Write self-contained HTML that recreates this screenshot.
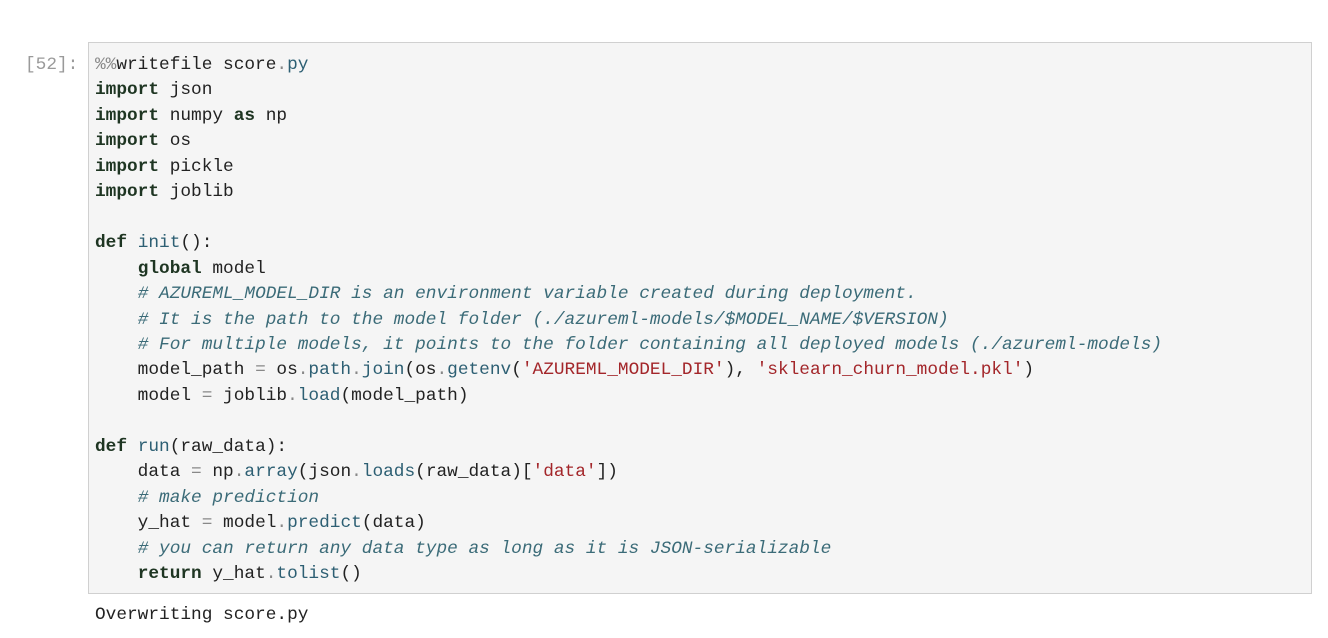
<!DOCTYPE html>
<html><head><meta charset="utf-8"><style>
body{margin:0;background:#fff;width:1328px;height:638px;overflow:hidden;font-family:"Liberation Mono",monospace;}
.prompt{position:absolute;left:25px;top:53px;font-size:17.8px;color:#9a9a9a;line-height:25.45px;}
.box{position:absolute;left:88px;top:42px;width:1224px;height:552px;background:#f5f5f5;border:1px solid #d0d0d0;box-sizing:border-box;}
pre{position:absolute;left:95px;top:53px;margin:0;font-family:"Liberation Mono",monospace;font-size:17.8px;line-height:25.45px;color:#222;}
.k{font-weight:bold;color:#1e3522}
.f{color:#2d5f73}
.c{font-style:italic;color:#3b6b78}
.s{color:#a3262a}
.o{color:#888}
.out{position:absolute;left:95px;top:603px;margin:0;font-size:17.8px;line-height:25px;color:#222;}
</style></head><body>
<div class="prompt">[52]:</div>
<div class="box"></div>
<pre><span class="o">%%</span>writefile score<span class="o">.</span><span class="f">py</span>
<span class="k">import</span> json
<span class="k">import</span> numpy <span class="k">as</span> np
<span class="k">import</span> os
<span class="k">import</span> pickle
<span class="k">import</span> joblib

<span class="k">def</span> <span class="f">init</span>():
    <span class="k">global</span> model
    <span class="c"># AZUREML_MODEL_DIR is an environment variable created during deployment.</span>
    <span class="c"># It is the path to the model folder (./azureml-models/$MODEL_NAME/$VERSION)</span>
    <span class="c"># For multiple models, it points to the folder containing all deployed models (./azureml-models)</span>
    model_path <span class="o">=</span> os<span class="o">.</span><span class="f">path</span><span class="o">.</span><span class="f">join</span>(os<span class="o">.</span><span class="f">getenv</span>(<span class="s">'AZUREML_MODEL_DIR'</span>), <span class="s">'sklearn_churn_model.pkl'</span>)
    model <span class="o">=</span> joblib<span class="o">.</span><span class="f">load</span>(model_path)

<span class="k">def</span> <span class="f">run</span>(raw_data):
    data <span class="o">=</span> np<span class="o">.</span><span class="f">array</span>(json<span class="o">.</span><span class="f">loads</span>(raw_data)[<span class="s">'data'</span>])
    <span class="c"># make prediction</span>
    y_hat <span class="o">=</span> model<span class="o">.</span><span class="f">predict</span>(data)
    <span class="c"># you can return any data type as long as it is JSON-serializable</span>
    <span class="k">return</span> y_hat<span class="o">.</span><span class="f">tolist</span>()</pre>
<pre class="out">Overwriting score.py</pre>
</body></html>
